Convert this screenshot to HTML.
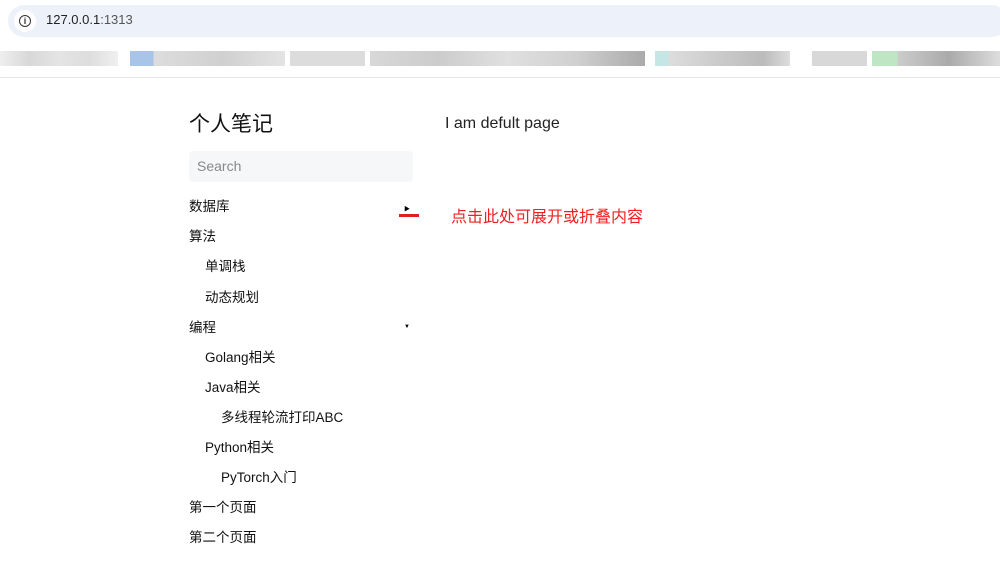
<!DOCTYPE html><html><head><meta charset="utf-8"><style>
body{margin:0;width:1000px;height:568px;overflow:hidden;background:#fff;font-family:"Liberation Sans","Noto Sans CJK SC",sans-serif;position:relative}
.abs{position:absolute}
.bar{left:8px;top:5px;width:1000px;height:32px;background:#edf2fa;border-radius:16px}
.bm{top:51px;height:15px;background:#d6d6d6}
.nav{position:absolute;left:189px;font-size:13.5px;color:#111;line-height:16px}
</style></head><body>
<div class="abs bar"></div>
<div class="abs" style="left:14px;top:10px;width:22px;height:22px;border-radius:11px;background:#fff"></div>
<div class="abs" style="left:19px;top:15px;width:10px;height:10px;border:1.5px solid #333;border-radius:50%;font-size:9px;line-height:10px;text-align:center;font-weight:bold;color:#333">i</div>
<div class="abs" style="left:46px;top:12px;font-size:13px;color:#222">127.0.0.1<span style="color:#555">:1313</span></div>
<div class="abs bm" style="left:0;width:118px;background:linear-gradient(90deg,#eee,#d8d8d8,#e4e4e4,#ddd,#f0f0f0)"></div>
<div class="abs bm" style="left:130px;width:155px;background:linear-gradient(90deg,#a8c4e8 0 15%,#ddd 15%,#d0d0d0 60%,#e4e4e4)"></div>
<div class="abs bm" style="left:290px;width:75px;background:#dcdcdc"></div>
<div class="abs bm" style="left:370px;width:275px;background:linear-gradient(90deg,#d8d8d8,#ccc,#e0e0e0,#d0d0d0,#aaa)"></div>
<div class="abs bm" style="left:655px;width:135px;background:linear-gradient(90deg,#c4e6e4 0 10%,#ddd 10%,#bbb 80%,#ddd)"></div>
<div class="abs bm" style="left:812px;width:55px;background:#d8d8d8"></div>
<div class="abs bm" style="left:872px;width:128px;background:linear-gradient(90deg,#bfe6c4 0 20%,#ccc 20%,#aaa 60%,#ddd)"></div>
<div class="abs" style="left:0;top:77px;width:1000px;height:1px;background:#e6e6e6"></div>
<div class="abs" style="left:189px;top:108px;font-size:21px;color:#111">个人笔记</div>
<div class="abs" style="left:189px;top:151px;width:224px;height:31px;background:#f6f7f9;border-radius:4px"></div>
<div class="abs" style="left:197px;top:158px;font-size:14px;color:#888">Search</div>
<div class="abs" style="left:445px;top:115px;font-size:16px;color:#222">I am defult page</div>
<div class="abs" style="left:404px;top:204px;font-size:6px">▶</div>
<div class="abs" style="left:404px;top:324px;font-size:6px">▼</div>
<div class="abs" style="left:399px;top:214px;width:20px;height:3px;background:#e02020"></div>
<div class="abs" style="left:451px;top:203px;font-size:16px;color:#f02020">点击此处可展开或折叠内容</div>
<div class="nav" style="top:199px">数据库</div>
<div class="nav" style="top:229px">算法</div>
<div class="nav" style="top:259px;left:205px">单调栈</div>
<div class="nav" style="top:290px;left:205px">动态规划</div>
<div class="nav" style="top:320px">编程</div>
<div class="nav" style="top:350px;left:205px">Golang相关</div>
<div class="nav" style="top:380px;left:205px">Java相关</div>
<div class="nav" style="top:410px;left:221px">多线程轮流打印ABC</div>
<div class="nav" style="top:440px;left:205px">Python相关</div>
<div class="nav" style="top:470px;left:221px">PyTorch入门</div>
<div class="nav" style="top:500px">第一个页面</div>
<div class="nav" style="top:530px">第二个页面</div>
</body></html>
